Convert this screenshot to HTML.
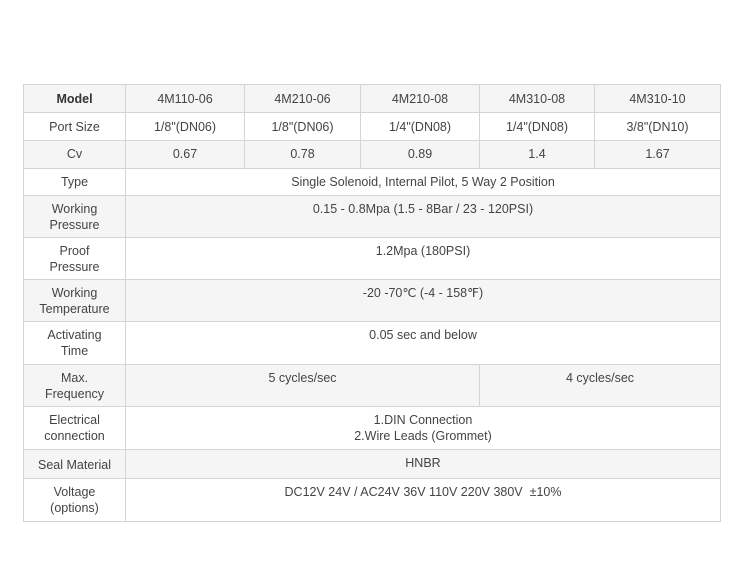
<!DOCTYPE html>
<html><head><style>
html,body{margin:0;padding:0;background:#fff;width:750px;height:582px;overflow:hidden}
table{position:absolute;left:23px;top:84px;border-collapse:collapse;font-family:"Liberation Sans",sans-serif;font-size:12.5px;color:#444;table-layout:fixed}
td{border:1px solid #d4d4d4;text-align:center;vertical-align:top;padding:5px 2px 0;line-height:16px;box-sizing:border-box}
tr.g td{background:#f5f5f5}
td.h{font-weight:bold;color:#333}
tr.hd td{padding-top:6px}
</style></head><body>
<table>
<colgroup><col style="width:102px"><col style="width:119px"><col style="width:116px"><col style="width:119px"><col style="width:115px"><col style="width:126px"></colgroup>
<tr class="g hd" style="height:28px"><td class="h">Model</td><td>4M110-06</td><td>4M210-06</td><td>4M210-08</td><td>4M310-08</td><td>4M310-10</td></tr>
<tr style="height:28px"><td style="padding-top:6px">Port Size</td><td style="padding-top:6px">1/8"(DN06)</td><td style="padding-top:6px">1/8"(DN06)</td><td style="padding-top:6px">1/4"(DN08)</td><td style="padding-top:6px">1/4"(DN08)</td><td style="padding-top:6px">3/8"(DN10)</td></tr>
<tr class="g" style="height:28px"><td>Cv</td><td>0.67</td><td>0.78</td><td>0.89</td><td>1.4</td><td>1.67</td></tr>
<tr style="height:27px"><td>Type</td><td colspan="5">Single Solenoid, Internal Pilot, 5 Way 2 Position</td></tr>
<tr class="g" style="height:42px"><td>Working<br>Pressure</td><td colspan="5">0.15 - 0.8Mpa (1.5 - 8Bar / 23 - 120PSI)</td></tr>
<tr style="height:42px"><td>Proof<br>Pressure</td><td colspan="5">1.2Mpa (180PSI)</td></tr>
<tr class="g" style="height:42px"><td>Working<br>Temperature</td><td colspan="5">-20 -70℃ (-4 - 158℉)</td></tr>
<tr style="height:43px"><td>Activating<br>Time</td><td colspan="5">0.05 sec and below</td></tr>
<tr class="g" style="height:42px"><td>Max.<br>Frequency</td><td colspan="3">5 cycles/sec</td><td colspan="2">4 cycles/sec</td></tr>
<tr style="height:43px"><td>Electrical<br>connection</td><td colspan="5">1.DIN Connection<br>2.Wire Leads (Grommet)</td></tr>
<tr class="g" style="height:29px"><td style="padding-top:7px">Seal Material</td><td colspan="5">HNBR</td></tr>
<tr style="height:43px"><td>Voltage<br>(options)</td><td colspan="5">DC12V 24V / AC24V 36V 110V 220V 380V &nbsp;±10%</td></tr>
</table>
</body></html>
